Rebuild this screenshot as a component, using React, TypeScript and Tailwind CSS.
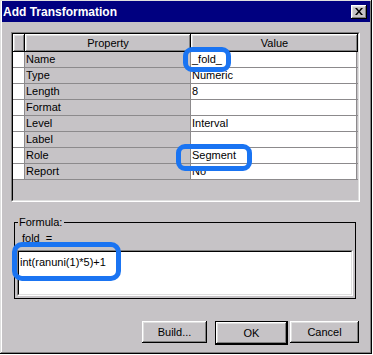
import React from 'react';

const rows: [string, string][] = [
    ["Name", "_fold_"],
    ["Type", "Numeric"],
    ["Length", "8"],
    ["Format", ""],
    ["Level", "Interval"],
    ["Label", ""],
    ["Role", "Segment"],
    ["Report", "No"],
];

const raised = "shadow-[inset_-1px_-1px_#000,inset_1px_1px_#fff,inset_-2px_-2px_#808080,inset_2px_2px_#dfdfdf]";

const Button = ({ text, isDefault }: { text: string; isDefault?: boolean }) => (
    <div className={isDefault ? "border border-black" : ""}>
        <div className={`flex items-center justify-center h-[22px] bg-[#c6c3c6] ${raised} ${isDefault ? "w-[71px] h-[20px]" : ""}`}>
            {text}
        </div>
    </div>
);

const App = () => {
    return (
        <div className="w-[373px] h-[355px] bg-white">
            <div className="relative w-[372px] h-[354px] bg-[#c6c3c6] font-['Liberation_Sans',Arial,sans-serif] text-[11px] text-black shadow-[inset_-1px_-1px_#000,inset_1px_1px_#dfdfdf,inset_-2px_-2px_#808080,inset_2px_2px_#fff]">
                {/* Title bar */}
                <div className="flex items-center justify-between h-[21px] ml-[2px] mr-[2px] pt-0 translate-y-[1px] bg-[#000080] pl-[1px] pr-[3px]">
                    <span className="text-white font-bold text-[12px]">Add Transformation</span>
                    <div className={`flex items-center justify-center w-[16px] h-[14px] bg-[#c6c3c6] ${raised}`}>
                        <svg width="8" height="7" viewBox="0 0 8 7">
                            <path d="M0 0h2l2 2.5L6 0h2L5 3.5 8 7H6L4 4.5 2 7H0l3-3.5z" fill="#000" />
                        </svg>
                    </div>
                </div>

                {/* Property grid */}
                <div className="ml-[11px] mt-[11px] w-[349px] h-[170px] border border-t-[#808080] border-l-[#808080] border-b-white border-r-white">
                    <div className="h-full border border-t-black border-l-black border-b-[#dfdfdf] border-r-[#dfdfdf] bg-[#c6c3c6]">
                        <div className="flex h-[18px]">
                            <div className={`w-[12px] bg-[#c6c3c6] ${raised}`} />
                            <div className={`w-[166px] flex items-center justify-center bg-[#c6c3c6] ${raised}`}>Property</div>
                            <div className={`w-[167px] flex items-center justify-center bg-[#c6c3c6] ${raised}`}>Value</div>
                        </div>
                        {rows.map(([k, v]) => (
                            <div key={k} className="flex h-[16px] border-b border-[#8c8a8c]">
                                <div className="w-[12px] bg-white border-r border-[#8c8a8c]" />
                                <div className="w-[166px] pl-[1px] leading-[15px] bg-[#c6c3c6] border-r border-[#8c8a8c]">{k}</div>
                                <div className="w-[166px] pl-[1px] leading-[15px] bg-white border-r border-[#8c8a8c]">{v}</div>
                            </div>
                        ))}
                    </div>
                </div>

                {/* Formula */}
                <fieldset className="ml-[14px] mt-[14px] w-[342px] h-[83px] border border-black pb-[1px]">
                    <legend className="ml-[3px] pl-[1px] pr-[2px] leading-[13px]">Formula:</legend>
                    <div className="h-[21px] pl-[7px] pt-[1px] whitespace-pre">fold  =</div>
                    <div className="mx-[2px] h-[46px] bg-white border border-t-[#808080] border-l-[#808080] border-b-white border-r-white">
                        <div className="h-full border border-t-black border-l-black border-b-[#dfdfdf] border-r-[#dfdfdf] pl-[1px] pt-[2px]">
                            int(ranuni(1)*5)+1
                        </div>
                    </div>
                </fieldset>

                {/* Buttons */}
                <div className="flex ml-[142px] mt-[22px]">
                    <div className="w-[65px]"><Button text="Build..." /></div>
                    <div className="ml-[8px] w-[73px]"><Button text="OK" isDefault /></div>
                    <div className="ml-[2px] w-[69px]"><Button text="Cancel" /></div>
                </div>

                {/* Annotation highlights */}
                <div className="absolute left-[183px] top-[47px] w-[48px] h-[25px] border-[5px] border-[#1a74f2] rounded-[9px]" />
                <div className="absolute left-[176px] top-[144px] w-[76px] h-[27px] border-[5px] border-[#1a74f2] rounded-[9px]" />
                <div className="absolute left-[12px] top-[242px] w-[109px] h-[39px] border-[5px] border-[#1a74f2] rounded-[10px]" />
            </div>
        </div>
    );
};

export default App;
